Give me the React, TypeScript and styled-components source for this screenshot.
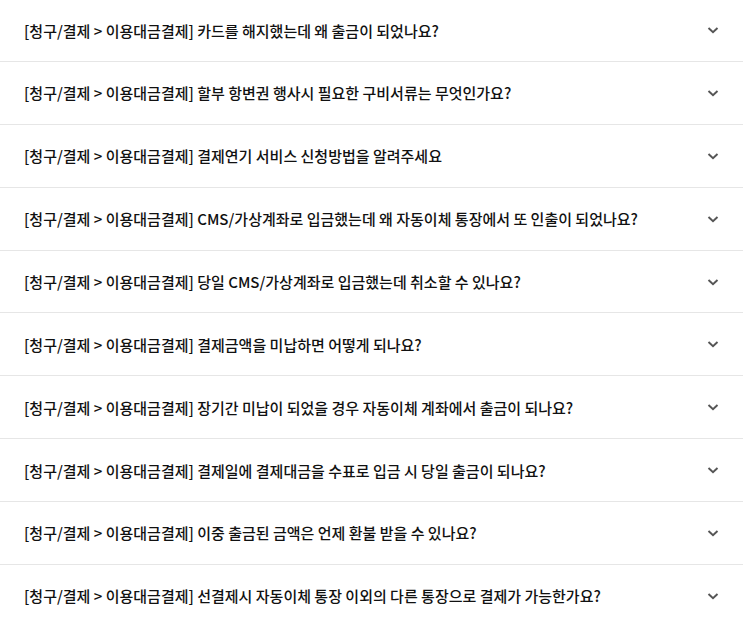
import React from 'react';
import styled, { createGlobalStyle } from 'styled-components';

const questions = [
    '카드를 해지했는데 왜 출금이 되었나요?',
    '할부 항변권 행사시 필요한 구비서류는 무엇인가요?',
    '결제연기 서비스 신청방법을 알려주세요',
    'CMS/가상계좌로 입금했는데 왜 자동이체 통장에서 또 인출이 되었나요?',
    '당일 CMS/가상계좌로 입금했는데 취소할 수 있나요?',
    '결제금액을 미납하면 어떻게 되나요?',
    '장기간 미납이 되었을 경우 자동이체 계좌에서 출금이 되나요?',
    '결제일에 결제대금을 수표로 입금 시 당일 출금이 되나요?',
    '이중 출금된 금액은 언제 환불 받을 수 있나요?',
    '선결제시 자동이체 통장 이외의 다른 통장으로 결제가 가능한가요?',
];

function App() {
    return (
        <>
            <GlobalStyle />
            <FaqList>
                {questions.map((q) => (
                    <FaqItem key={q}>
                        <Question>[청구/결제 &gt; 이용대금결제] {q}</Question>
                        <Chevron width="14" height="14" viewBox="0 0 14 14">
                            <path d="M2.5 5 L7 9.3 L11.5 5" fill="none" stroke="#555" strokeWidth="1.9" />
                        </Chevron>
                    </FaqItem>
                ))}
            </FaqList>
        </>
    );
}

const GlobalStyle = createGlobalStyle`
    body {
        margin: 0;
        background: #fff;
        font-family: "Noto Sans CJK KR", "Noto Sans", sans-serif;
    }
`;

const FaqList = styled.ul`
    width: 743px;
    margin: -0.86px 0 0;
    padding: 0;
    list-style: none;
`;

const FaqItem = styled.li`
    display: flex;
    align-items: center;
    justify-content: space-between;
    height: 61.86px;
    padding: 0 23px 0 24px;
    border-bottom: 1px solid #e6e6e6;
`;

const Question = styled.div`
    font-size: 15px;
    font-weight: 500;
    color: #111;
    letter-spacing: 0;
`;

const Chevron = styled.svg`
    flex-shrink: 0;
`;

export default App;
